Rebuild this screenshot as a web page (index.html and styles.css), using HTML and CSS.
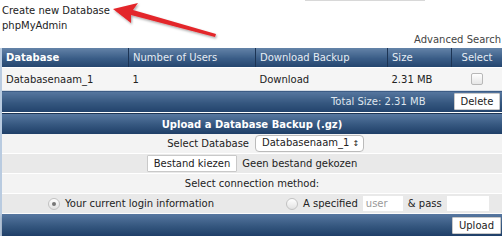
FILE: index.html
```html
<!DOCTYPE html>
<html lang="en">
<head>
    <meta charset="UTF-8">
    <title>Databases</title>
    <link rel="stylesheet" href="styles.css">
</head>
<body>
    <div class="page">
        <div class="top">
            <div class="links">
                <a href="#">Create new Database</a>
                <a href="#">phpMyAdmin</a>
            </div>
            <div class="search-box"></div>
        </div>
        <div class="adv"><a href="#">Advanced Search</a></div>

        <div class="panel">
            <table class="db-table">
                <tr class="head">
                    <th class="c-db sorted">Database</th>
                    <th class="c-users">Number of Users</th>
                    <th class="c-dl">Download Backup</th>
                    <th class="c-size">Size</th>
                    <th class="c-sel">Select</th>
                </tr>
                <tr class="data">
                    <td>Databasenaam_1</td>
                    <td>1</td>
                    <td>Download</td>
                    <td>2.31 MB</td>
                    <td class="c-sel"><span class="check"></span></td>
                </tr>
                <tr class="total">
                    <td colspan="4" class="total-label">Total Size: 2.31 MB</td>
                    <td class="c-sel"><span class="btn">Delete</span></td>
                </tr>
            </table>

            <div class="upload">
                <div class="bar title">Upload a Database Backup (.gz)</div>
                <div class="row light split">
                    <span class="split-label">Select Database</span>
                    <span><span class="select">Databasenaam_1 <span class="arrows">&#8597;</span></span></span>
                </div>
                <div class="row dark">
                    <span class="btn">Bestand kiezen</span> Geen bestand gekozen
                </div>
                <div class="row light">Select connection method:</div>
                <div class="row dark methods">
                    <div class="method">
                        <span class="radio on"></span> Your current login information
                    </div>
                    <div class="method">
                        <span class="radio"></span> A specified
                        <span class="field user">user</span> &amp; pass
                        <span class="field pass"></span>
                    </div>
                </div>
                <div class="bar foot"><span class="btn">Upload</span></div>
            </div>
        </div>
    </div>

    <svg class="arrow" width="130" height="40" viewBox="0 0 130 40">
        <defs>
            <filter id="shade" x="-20%" y="-50%" width="140%" height="200%">
                <feDropShadow dx="1" dy="1.5" stdDeviation="1.2" flood-color="#000" flood-opacity="0.35"/>
            </filter>
        </defs>
        <g filter="url(#shade)" fill="#e3262a">
            <polygon points="1,7 26,1 21,8 104,32 103,35 19,13 19,21"/>
        </g>
    </svg>
</body>
</html>
```

FILE: styles.css
```css
body {
    margin: 0;
    font-family: 'DejaVu Sans', Verdana, sans-serif;
    font-size: 10px;
    color: #222;
    background: #fff;
    position: relative;
}

a {
    color: #222;
    text-decoration: none;
}

.page {
    width: 502px;
}

.top {
    display: flex;
    justify-content: space-between;
    align-items: flex-start;
    height: 33px;
    padding: 4px 0 0 2px;
    box-sizing: border-box;
}

.links {
    display: flex;
    flex-direction: column;
    gap: 2px;
    font-size: 10px;
    line-height: 13px;
}

.search-box {
    width: 120px;
    height: 20px;
    margin: -24px 77px 0 0;
    border-bottom: 1px solid #d8d8d8;
}

.adv {
    text-align: right;
    font-size: 10px;
    line-height: 14px;
    padding-right: 1px;
    color: #444;
}

.adv a {
    color: #444;
}

.panel {
    margin-top: 1px;
    border-left: 2px solid #b9cbe0;
}

.db-table {
    width: 100%;
    border-collapse: collapse;
    table-layout: fixed;
}

.db-table th,
.db-table td {
    padding: 0 4px;
    text-align: left;
    white-space: nowrap;
}

.head th {
    height: 19px;
    background: linear-gradient(#6483a8, #3a5d87 55%, #25466f);
    color: #e6ecf3;
    font-weight: normal;
    border-right: 1px solid #1c3454;
    border-bottom: 1px solid #fff;
}

.head th.sorted {
    color: #fff;
    font-weight: bold;
}

.head th:last-child {
    border-right: none;
}

.c-db { width: 118px; }
.c-users { width: 118px; }
.c-dl { width: 123px; }
.c-size { width: 55px; }

.db-table .c-sel {
    text-align: center;
    padding: 0 2px;
}

.data td {
    height: 22px;
    background: #f5f5f5;
    border-bottom: 1px solid #d4dbe4;
}

.check {
    display: inline-block;
    width: 10px;
    height: 10px;
    border: 1px solid #b8b8b8;
    border-radius: 2px;
    background: linear-gradient(#fff, #e6e6e6);
    vertical-align: middle;
}

.total td {
    height: 21px;
    background: linear-gradient(#5777a0, #35577f 55%, #22426b);
    color: #dfe6ee;
}

.db-table .total-label {
    text-align: right;
    padding-right: 26px;
}

.btn {
    display: inline-block;
    background: #fff;
    color: #222;
    padding: 0 6px;
    line-height: 15px;
    border: 1px solid #c9c9c9;
    border-radius: 1px;
}

.upload {
    margin-top: 1px;
    border-top: 1px solid #1c3454;
}

.bar {
    height: 20px;
    background: linear-gradient(#5777a0, #35577f 55%, #1f3f68);
    color: #fff;
    display: flex;
    align-items: center;
}

.title {
    justify-content: center;
    font-weight: bold;
}

.foot {
    height: 22px;
    justify-content: flex-end;
    padding-right: 1px;
    box-shadow: 0 2px 3px rgba(0, 0, 0, 0.25);
}

.row {
    height: 19px;
    display: flex;
    align-items: center;
    justify-content: center;
    gap: 5px;
    border-bottom: 1px solid #fff;
    white-space: nowrap;
}

.row.split {
    display: grid;
    grid-template-columns: 1fr 1fr;
    gap: 6px;
}

.split-label {
    text-align: right;
}

.light {
    background: #f3f3f3;
}

.dark {
    background: #e9e9e9;
}

.select {
    display: inline-block;
    min-width: 105px;
    box-sizing: border-box;
    border: 1px solid #bbb;
    border-radius: 4px;
    background: #fff;
    padding: 0 4px 0 6px;
    line-height: 14px;
    white-space: nowrap;
}

.arrows {
    font-size: 8px;
}

.methods {
    justify-content: flex-start;
    gap: 0;
}

.method {
    display: flex;
    align-items: center;
    gap: 5px;
}

.method:first-child {
    width: 284px;
    padding-left: 46px;
    box-sizing: border-box;
}

.radio {
    display: inline-block;
    width: 10px;
    height: 10px;
    border-radius: 50%;
    border: 1px solid #c2c2c2;
    background: linear-gradient(#fff, #e2e2e2);
    position: relative;
}

.radio.on::after {
    content: "";
    position: absolute;
    left: 3px;
    top: 3px;
    width: 4px;
    height: 4px;
    border-radius: 50%;
    background: #777;
}

.field {
    display: inline-block;
    background: #fff;
    color: #999;
    height: 15px;
    line-height: 15px;
    padding: 0 3px;
    box-sizing: border-box;
}

.field.user {
    width: 40px;
}

.field.pass {
    width: 42px;
}

.arrow {
    position: absolute;
    left: 112px;
    top: 2px;
}
```
